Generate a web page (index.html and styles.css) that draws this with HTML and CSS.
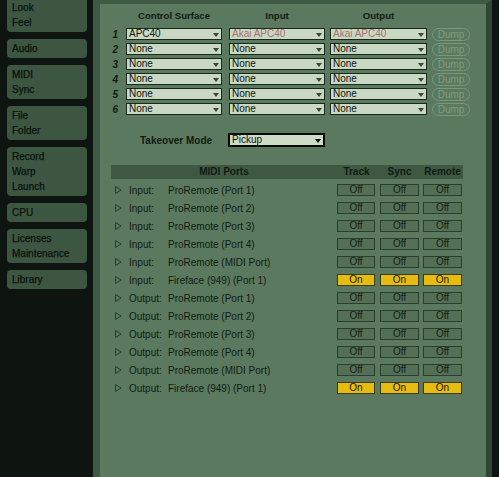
FILE: index.html
```html
<!DOCTYPE html>
<html>
<head>
<meta charset="utf-8">
<title>Preferences – MIDI Sync</title>
<link rel="stylesheet" href="styles.css">
</head>
<body>
<div class="app">
  <nav class="sidebar">
    <div class="tab tab-first">Look<br>Feel</div>
    <div class="tab">Audio</div>
    <div class="tab">MIDI<br>Sync</div>
    <div class="tab">File<br>Folder</div>
    <div class="tab">Record<br>Warp<br>Launch</div>
    <div class="tab">CPU</div>
    <div class="tab">Licenses<br>Maintenance</div>
    <div class="tab">Library</div>
  </nav>

  <main class="panel">
    <section class="surfaces">
      <div class="cs-row cs-head">
        <span></span>
        <span class="col-title">Control Surface</span>
        <span class="col-title">Input</span>
        <span class="col-title wide">Output</span>
        <span></span>
      </div>
      <div class="cs-row">
        <span class="num">1</span>
        <div class="select"><span>APC40</span><i class="arrow"></i></div>
        <div class="select"><span class="device">Akai APC40</span><i class="arrow"></i></div>
        <div class="select wide"><span class="device">Akai APC40</span><i class="arrow"></i></div>
        <span class="dump">Dump</span>
      </div>
      <div class="cs-row">
        <span class="num">2</span>
        <div class="select"><span>None</span><i class="arrow"></i></div>
        <div class="select"><span>None</span><i class="arrow"></i></div>
        <div class="select wide"><span>None</span><i class="arrow"></i></div>
        <span class="dump">Dump</span>
      </div>
      <div class="cs-row">
        <span class="num">3</span>
        <div class="select"><span>None</span><i class="arrow"></i></div>
        <div class="select"><span>None</span><i class="arrow"></i></div>
        <div class="select wide"><span>None</span><i class="arrow"></i></div>
        <span class="dump">Dump</span>
      </div>
      <div class="cs-row">
        <span class="num">4</span>
        <div class="select"><span>None</span><i class="arrow"></i></div>
        <div class="select"><span>None</span><i class="arrow"></i></div>
        <div class="select wide"><span>None</span><i class="arrow"></i></div>
        <span class="dump">Dump</span>
      </div>
      <div class="cs-row">
        <span class="num">5</span>
        <div class="select"><span>None</span><i class="arrow"></i></div>
        <div class="select"><span>None</span><i class="arrow"></i></div>
        <div class="select wide"><span>None</span><i class="arrow"></i></div>
        <span class="dump">Dump</span>
      </div>
      <div class="cs-row">
        <span class="num">6</span>
        <div class="select"><span>None</span><i class="arrow"></i></div>
        <div class="select"><span>None</span><i class="arrow"></i></div>
        <div class="select wide"><span>None</span><i class="arrow"></i></div>
        <span class="dump">Dump</span>
      </div>
    </section>

    <section class="takeover">
      <span class="takeover-label">Takeover Mode</span>
      <div class="select select-strong"><span>Pickup</span><i class="arrow"></i></div>
    </section>

    <section class="ports">
      <div class="ports-head">
        <span>MIDI Ports</span>
        <span>Track</span>
        <span>Sync</span>
        <span>Remote</span>
      </div>

      <div class="port-row">
        <div class="port"><svg class="tri" width="7" height="8" viewBox="0 0 7 8"><polygon points="0.5,0.5 6.2,4 0.5,7.5" fill="none" stroke="#2b3f2e" stroke-width="1"/></svg><span class="kind">Input:</span><span>ProRemote (Port 1)</span></div>
        <span class="btn">Off</span><span class="btn">Off</span><span class="btn">Off</span>
      </div>
      <div class="port-row">
        <div class="port"><svg class="tri" width="7" height="8" viewBox="0 0 7 8"><polygon points="0.5,0.5 6.2,4 0.5,7.5" fill="none" stroke="#2b3f2e" stroke-width="1"/></svg><span class="kind">Input:</span><span>ProRemote (Port 2)</span></div>
        <span class="btn">Off</span><span class="btn">Off</span><span class="btn">Off</span>
      </div>
      <div class="port-row">
        <div class="port"><svg class="tri" width="7" height="8" viewBox="0 0 7 8"><polygon points="0.5,0.5 6.2,4 0.5,7.5" fill="none" stroke="#2b3f2e" stroke-width="1"/></svg><span class="kind">Input:</span><span>ProRemote (Port 3)</span></div>
        <span class="btn">Off</span><span class="btn">Off</span><span class="btn">Off</span>
      </div>
      <div class="port-row">
        <div class="port"><svg class="tri" width="7" height="8" viewBox="0 0 7 8"><polygon points="0.5,0.5 6.2,4 0.5,7.5" fill="none" stroke="#2b3f2e" stroke-width="1"/></svg><span class="kind">Input:</span><span>ProRemote (Port 4)</span></div>
        <span class="btn">Off</span><span class="btn">Off</span><span class="btn">Off</span>
      </div>
      <div class="port-row">
        <div class="port"><svg class="tri" width="7" height="8" viewBox="0 0 7 8"><polygon points="0.5,0.5 6.2,4 0.5,7.5" fill="none" stroke="#2b3f2e" stroke-width="1"/></svg><span class="kind">Input:</span><span>ProRemote (MIDI Port)</span></div>
        <span class="btn">Off</span><span class="btn">Off</span><span class="btn">Off</span>
      </div>
      <div class="port-row">
        <div class="port"><svg class="tri" width="7" height="8" viewBox="0 0 7 8"><polygon points="0.5,0.5 6.2,4 0.5,7.5" fill="none" stroke="#2b3f2e" stroke-width="1"/></svg><span class="kind">Input:</span><span>Fireface (949) (Port 1)</span></div>
        <span class="btn on">On</span><span class="btn on">On</span><span class="btn on">On</span>
      </div>
      <div class="port-row">
        <div class="port"><svg class="tri" width="7" height="8" viewBox="0 0 7 8"><polygon points="0.5,0.5 6.2,4 0.5,7.5" fill="none" stroke="#2b3f2e" stroke-width="1"/></svg><span class="kind">Output:</span><span>ProRemote (Port 1)</span></div>
        <span class="btn">Off</span><span class="btn">Off</span><span class="btn">Off</span>
      </div>
      <div class="port-row">
        <div class="port"><svg class="tri" width="7" height="8" viewBox="0 0 7 8"><polygon points="0.5,0.5 6.2,4 0.5,7.5" fill="none" stroke="#2b3f2e" stroke-width="1"/></svg><span class="kind">Output:</span><span>ProRemote (Port 2)</span></div>
        <span class="btn">Off</span><span class="btn">Off</span><span class="btn">Off</span>
      </div>
      <div class="port-row">
        <div class="port"><svg class="tri" width="7" height="8" viewBox="0 0 7 8"><polygon points="0.5,0.5 6.2,4 0.5,7.5" fill="none" stroke="#2b3f2e" stroke-width="1"/></svg><span class="kind">Output:</span><span>ProRemote (Port 3)</span></div>
        <span class="btn">Off</span><span class="btn">Off</span><span class="btn">Off</span>
      </div>
      <div class="port-row">
        <div class="port"><svg class="tri" width="7" height="8" viewBox="0 0 7 8"><polygon points="0.5,0.5 6.2,4 0.5,7.5" fill="none" stroke="#2b3f2e" stroke-width="1"/></svg><span class="kind">Output:</span><span>ProRemote (Port 4)</span></div>
        <span class="btn">Off</span><span class="btn">Off</span><span class="btn">Off</span>
      </div>
      <div class="port-row">
        <div class="port"><svg class="tri" width="7" height="8" viewBox="0 0 7 8"><polygon points="0.5,0.5 6.2,4 0.5,7.5" fill="none" stroke="#2b3f2e" stroke-width="1"/></svg><span class="kind">Output:</span><span>ProRemote (MIDI Port)</span></div>
        <span class="btn">Off</span><span class="btn">Off</span><span class="btn">Off</span>
      </div>
      <div class="port-row">
        <div class="port"><svg class="tri" width="7" height="8" viewBox="0 0 7 8"><polygon points="0.5,0.5 6.2,4 0.5,7.5" fill="none" stroke="#2b3f2e" stroke-width="1"/></svg><span class="kind">Output:</span><span>Fireface (949) (Port 1)</span></div>
        <span class="btn on">On</span><span class="btn on">On</span><span class="btn on">On</span>
      </div>
    </section>
  </main>
</div>
</body>
</html>
```

FILE: styles.css
```css
* { box-sizing: border-box; }

html, body {
  margin: 0;
  padding: 0;
  height: 100%;
}

body {
  background: #0e1510;
  font-family: "Liberation Sans", Arial, sans-serif;
  font-size: 10px;
  color: #111b12;
  overflow: hidden;
}

.app {
  display: flex;
  height: 477px;
  width: 499px;
}

/* ---------- left tab column ---------- */
.sidebar {
  width: 93px;
  flex: none;
  padding: 0 6px 0 7px;
  display: flex;
  flex-direction: column;
  gap: 7px;
}

.tab {
  background: #3c5642;
  border-radius: 4px;
  padding: 2px 5px;
  line-height: 15px;
  color: #0a110b;
  -webkit-text-stroke: 0.25px #0a110b;
}

.tab-first {
  padding-top: 0;
  border-top-left-radius: 0;
  border-top-right-radius: 0;
}

/* ---------- main preferences panel ---------- */
.panel {
  width: 399px;
  flex: none;
  background: #5b795e;
  border-left: 7px solid #3e5a44;
  border-top: 4px solid #3e5a44;
  border-right: 6px solid #2e4633;
}

/* control surface table */
.surfaces {
  padding-top: 6px;
}

.cs-row {
  display: grid;
  grid-template-columns: 26px 103px 101px 102px 38px;
  height: 12px;
  margin-top: 3px;
  align-items: center;
}

.cs-head {
  margin-top: 0;
  margin-bottom: 5px;
  line-height: 12px;
}

.col-title {
  width: 96px;
  text-align: center;
  font-weight: bold;
  font-size: 9.6px;
}

.col-title.wide { width: 97px; }

.num {
  text-align: right;
  padding-right: 8px;
  font-weight: bold;
  font-style: italic;
  font-size: 10px;
}

.select {
  width: 96px;
  height: 12px;
  border: 1px solid #1a281b;
  background: #c9d8c3;
  display: flex;
  align-items: center;
  justify-content: space-between;
  padding: 0 2px 0 2px;
  line-height: 10px;
  color: #0e140e;
  white-space: nowrap;
}

.select.wide { width: 97px; }

.select .device { color: #a7706b; }

.arrow {
  width: 0;
  height: 0;
  border-left: 3.5px solid transparent;
  border-right: 3.5px solid transparent;
  border-top: 4px solid #34473a;
  margin-top: 2px;
}

.dump {
  width: 38px;
  height: 13px;
  border: 1px solid #7a977c;
  border-radius: 7px;
  color: #7f9c80;
  text-align: center;
  line-height: 11px;
  margin-top: 1px;
}

/* takeover mode */
.takeover {
  display: flex;
  align-items: center;
  margin-top: 19px;
  padding-left: 40px;
}

.takeover-label {
  width: 88px;
  font-weight: bold;
}

.select-strong {
  width: 97px;
  height: 14px;
  border: 2px solid #050805;
  background: #cddbc6;
}

.select-strong .arrow {
  border-top-color: #050805;
  margin-top: 1px;
}

/* MIDI ports table */
.ports {
  margin-top: 18px;
  margin-left: 11px;
  width: 352px;
}

.ports-head {
  display: grid;
  grid-template-columns: 226px 43px 43px 40px;
  height: 14px;
  line-height: 14px;
  background: #3e5843;
  font-weight: bold;
  margin-bottom: 2px;
}

.ports-head span { text-align: center; }
.ports-head span:nth-child(2),
.ports-head span:nth-child(3) { width: 39px; }
.ports-head span:nth-child(4) { width: 39px; }

.port-row {
  display: grid;
  grid-template-columns: 226px 43px 43px 40px;
  height: 18px;
  align-items: center;
}

.port {
  display: flex;
  align-items: center;
  white-space: nowrap;
}

.tri {
  margin-left: 4px;
  flex: none;
}

.kind {
  margin-left: 7px;
  width: 39px;
}

.btn {
  width: 39px;
  height: 12px;
  border: 1px solid #2b3d2d;
  background: #536f56;
  text-align: center;
  line-height: 10px;
  color: #141f15;
}

.port-row .btn:first-of-type { width: 38px; }

.btn.on {
  background: #e6bc12;
  border-color: #3b3a12;
  color: #1a1606;
}
```
